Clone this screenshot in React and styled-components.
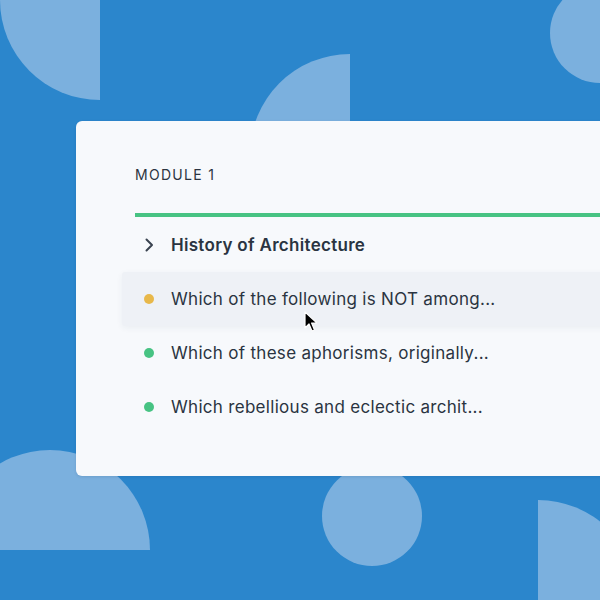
import React from "react";
import styled, { createGlobalStyle } from "styled-components";

const Global = createGlobalStyle`
  html, body { margin: 0; padding: 0; }
  body { font-family: "Inter", "Open Sans", sans-serif; }
`;

const Page = styled.div`
  position: relative;
  width: 600px;
  height: 600px;
  overflow: hidden;
  background: #2b86cc;
  padding: 121px 0 0 76px;
  box-sizing: border-box;
`;

const Shape = styled.div`
  position: absolute;
  background: #7bb0de;
  left: ${(p) => p.x}px;
  top: ${(p) => p.y}px;
  width: ${(p) => p.r * 2}px;
  height: ${(p) => p.r * 2}px;
  border-radius: 50%;
  clip-path: ${(p) => p.clip || "none"};
`;

const Card = styled.section`
  position: relative;
  z-index: 1;
  width: 600px;
  height: 355px;
  background: #f7f9fc;
  border-radius: 6px;
  box-sizing: border-box;
  padding: 44px 0 0 59px;
  box-shadow: 0 1px 3px rgba(10, 40, 80, 0.12);
`;

const Label = styled.div`
  font-size: 14px;
  line-height: 20px;
  letter-spacing: 1.3px;
  color: #2b3441;
  text-transform: uppercase;
`;

const Progress = styled.div`
  margin-top: 28px;
  height: 4px;
  background: #47c383;
`;

const List = styled.ul`
  list-style: none;
  margin: 0 0 0 -13px;
  padding: 0;
`;

const Row = styled.li`
  display: flex;
  align-items: center;
  gap: 17px;
  height: ${(p) => (p.$head ? 55 : 54)}px;
  padding-left: 22px;
  font-size: 17px;
  letter-spacing: 0.3px;
  font-weight: ${(p) => (p.$head ? 600 : 400)};
  color: #2a3441;
  background: ${(p) => (p.$active ? "#eef1f6" : "transparent")};
  box-shadow: ${(p) => (p.$active ? "0 2px 6px rgba(40,60,90,0.06)" : "none")};
  border-radius: 3px 0 0 3px;
  white-space: nowrap;
`;

const Dot = styled.span`
  flex: none;
  width: 10px;
  height: 10px;
  border-radius: 50%;
  background: ${(p) => p.color};
`;

const Chevron = styled.svg`
  flex: none;
  width: 10px;
  height: 14px;
`;

const Cursor = styled.svg`
  position: absolute;
  z-index: 2;
  left: 303px;
  top: 311px;
  width: 14px;
  height: 22px;
`;

const items = [
  { text: "Which of the following is NOT among...", color: "#e8b84a", active: true },
  { text: "Which of these aphorisms, originally...", color: "#47c383" },
  { text: "Which rebellious and eclectic archit...", color: "#47c383" },
];

export default function App() {
  return (
    <>
      <Global />
      <Page>
        <Shape x={0} y={-100} r={100} clip="inset(0 50% 0 0)" />
        <Shape x={250} y={54} r={100} clip="inset(0 50% 0 0)" />
        <Shape x={550} y={-17} r={50} />
        <Shape x={-50} y={450} r={100} clip="inset(0 0 50% 0)" />
        <Shape x={322} y={466} r={50} />
        <Shape x={438} y={500} r={100} clip="inset(0 0 0 50%)" />
        <Card>
          <Label>Module 1</Label>
          <Progress />
          <List>
            <Row $head>
              <Chevron viewBox="0 0 10 14">
                <path d="M2.5 1.5 L8 7 L2.5 12.5" fill="none" stroke="#3a4350" strokeWidth="2" strokeLinecap="round" strokeLinejoin="round" />
              </Chevron>
              History of Architecture
            </Row>
            {items.map((it) => (
              <Row key={it.text} $active={it.active}>
                <Dot color={it.color} />
                {it.text}
              </Row>
            ))}
          </List>
        </Card>
        <Cursor viewBox="0 0 14 22">
          <path d="M2 1 L2 17 L6 13 L9 20 L11.5 19 L8.6 12 L14 12 Z" fill="#000" stroke="#fff" strokeWidth="1.2" strokeLinejoin="round" />
        </Cursor>
      </Page>
    </>
  );
}
